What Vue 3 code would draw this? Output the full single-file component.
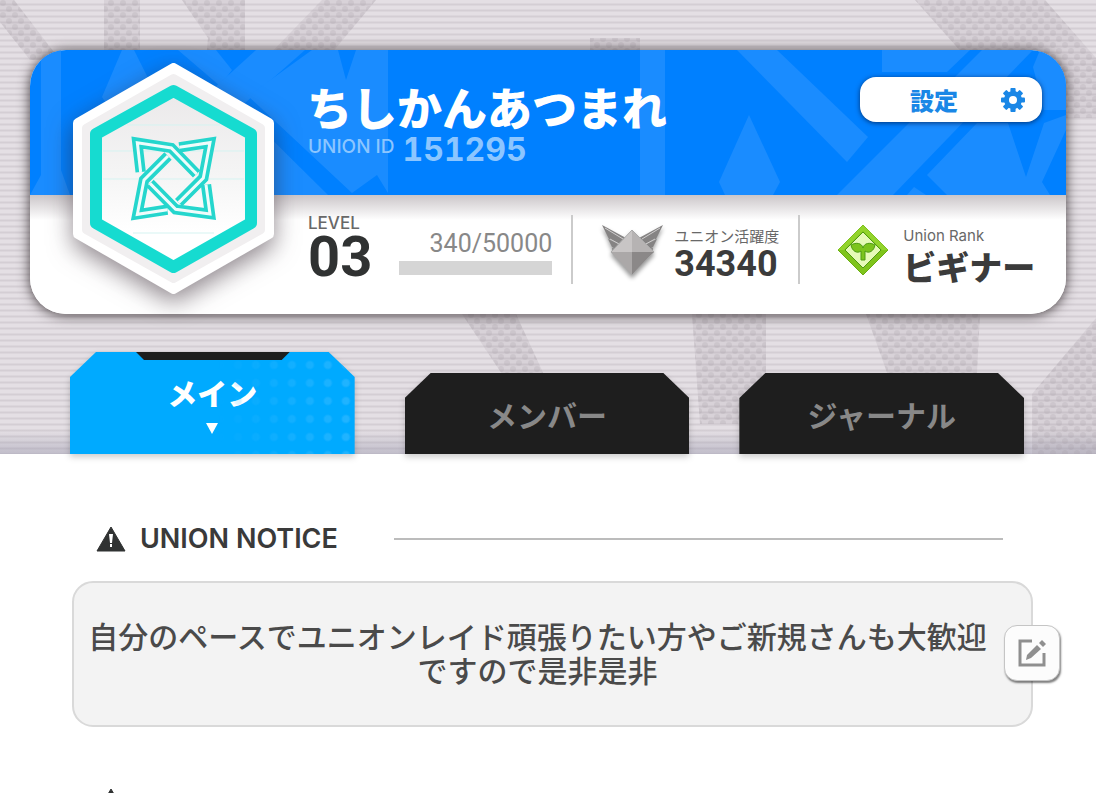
<template>
  <div class="union-page">
    <header class="hero">
      <!-- 背景のハーフトーン - Halftone backdrop -->
      <svg class="hero-pattern" viewBox="0 0 1096 454" preserveAspectRatio="none" aria-hidden="true">
        <defs>
          <pattern id="halftone" width="12" height="12" patternUnits="userSpaceOnUse">
            <circle cx="3" cy="3" r="3" />
            <circle cx="9" cy="9" r="3" />
          </pattern>
        </defs>
        <g class="halftone-base">
          <polygon v-for="shape in backdropShapes" :key="shape" :points="shape" />
        </g>
        <g class="halftone-dots" fill="url(#halftone)">
          <polygon v-for="shape in backdropShapes" :key="shape" :points="shape" />
        </g>
      </svg>

      <section class="union-card">
        <div class="banner">
          <svg class="banner-pattern" viewBox="0 0 1036 145" preserveAspectRatio="none" aria-hidden="true">
            <polygon v-for="shape in bannerShapes" :key="shape" :points="shape" />
          </svg>
          <div class="union-title">
            <h1>{{ union.name }}</h1>
            <p class="union-id">
              <span class="union-id-label">UNION ID</span>
              <span class="union-id-value">{{ union.id }}</span>
            </p>
          </div>
          <button type="button" class="settings-button">
            <span>設定</span>
            <svg viewBox="0 0 24 24" class="gear" aria-hidden="true">
              <rect
                v-for="angle in gearAngles"
                :key="angle"
                x="9.4"
                y="0"
                width="5.2"
                height="6"
                rx="1"
                :transform="`rotate(${angle} 12 12)`"
              />
              <circle cx="12" cy="12" r="6.5" class="gear-ring" />
            </svg>
          </button>
        </div>

        <!-- ユニオンエンブレム - Union emblem -->
        <svg class="emblem" viewBox="0 0 201 231" aria-hidden="true">
          <defs>
            <linearGradient id="emblem-fill" x1="0" y1="0" x2="0" y2="1">
              <stop offset="0" stop-color="#ebe9ea" />
              <stop offset="0.45" stop-color="#f4f4f4" />
              <stop offset="0.8" stop-color="#ffffff" />
            </linearGradient>
          </defs>
          <polygon class="emblem-outer" points="100.5,5 196,60 196,171 100.5,226 5,171 5,60" />
          <polygon class="emblem-rim" points="100.5,15 188,65 188,167 100.5,216 13,167 13,65" />
          <polygon class="emblem-ring" points="100.5,28 178,71 178,160 100.5,204 23,160 23,71" />
          <path class="emblem-scan" d="M54 62H147M30 88H171M30 116H171M60 170H141" />
          <g transform="translate(37 47) scale(0.3333)">
            <g v-for="strand in knotStrands" :key="strand">
              <polyline class="knot-edge" :points="strand" />
              <polyline class="knot-core" :points="strand" />
            </g>
          </g>
        </svg>

        <div class="stats">
          <div class="stat level">
            <div class="level-number">
              <span class="level-label">LEVEL</span>
              <strong>{{ union.level }}</strong>
            </div>
            <div class="exp">
              <span class="exp-value">340/50000</span>
              <div class="exp-bar" role="progressbar" aria-valuemin="0" aria-valuemax="50000" aria-valuenow="340"></div>
            </div>
          </div>

          <div class="stat activity">
            <svg class="wing-badge" viewBox="0 0 62 58" aria-hidden="true">
              <g class="wings">
                <path d="M0 3 L24 16 L18 22 L7 17 Z" />
                <path d="M6 17 L18 23 L14 27 L10 25 Z" />
                <path d="M10 26 L15 27 L11 31 Z" />
                <path d="M61 3 L37 16 L43 22 L54 17 Z" />
                <path d="M55 17 L43 23 L47 27 L51 25 Z" />
                <path d="M51 26 L46 27 L50 31 Z" />
                <path class="wing-line" d="M3 6 L21 17 M8 17 L19 23 M58 6 L40 17 M53 17 L42 23" />
              </g>
              <path d="M30 8 L9 30 H30 Z" fill="#c8c5c5" />
              <path d="M30 8 L52 30 H30 Z" fill="#b6b3b3" />
              <path d="M9 30 L30 53 V30 Z" fill="#aba8a8" />
              <path d="M52 30 L30 53 V30 Z" fill="#8b8888" />
              <path d="M30 8 L52 30 L30 53 L9 30 Z" fill="none" stroke="#aaa" />
            </svg>
            <div class="stat-text">
              <span class="activity-label">ユニオン活躍度</span>
              <strong class="activity-value">{{ union.activity }}</strong>
            </div>
          </div>

          <div class="stat rank">
            <svg class="rank-badge" viewBox="0 0 52 52" aria-hidden="true">
              <path d="M26 1 L51 26 L26 51 L1 26 Z" fill="#7fc41c" stroke="#69ad10" />
              <path d="M26 1 L51 26 L45 26 L26 7 L7 26 L1 26 Z" fill="#93d42c" />
              <path d="M26 8 L44 26 L26 44 L8 26 Z" fill="#e6fab8" stroke="#4f9a10" />
              <path
                d="M26 24 C25 19 19 18 14 21 C15 27 20 30 24 27 L24 28 V36 H28 V27 C32 30 37 27 38 21 C33 18 27 19 26 24 Z"
                fill="#7cc41e"
                stroke="#4c9b12"
              />
            </svg>
            <div class="stat-text">
              <span class="rank-label">Union Rank</span>
              <strong class="rank-value">{{ union.rank }}</strong>
            </div>
          </div>
        </div>
      </section>

      <nav class="tabs">
        <button
          v-for="tab in tabs"
          :key="tab.id"
          type="button"
          class="tab"
          :class="{ active: tab.id === activeTab }"
          @click="activeTab = tab.id"
        >
          <span>{{ tab.label }}</span>
          <svg v-if="tab.id === activeTab" class="tab-arrow" viewBox="0 0 12 11" aria-hidden="true">
            <path d="M0 0 H12 L6 11 Z" />
          </svg>
        </button>
      </nav>
    </header>

    <main class="content">
      <section class="notice">
        <h2 class="section-title">
          <svg class="warning" viewBox="0 0 30 26" aria-hidden="true">
            <path d="M15 1 L29 25 H1 Z" />
            <path class="warning-mark" d="M13 8 H17 L16 17 H14 Z M14 18 H16 V21 H14 Z" />
          </svg>
          <span>UNION NOTICE</span>
        </h2>
        <div class="notice-box">
          <p>{{ union.notice }}</p>
          <button type="button" class="edit-button" aria-label="編集">
            <svg viewBox="0 0 30 30" aria-hidden="true">
              <path class="edit-frame" d="M15 3 H3 V27 H27 V15" />
              <path d="M9 22 L10 17 L20 7 L24 11 L14 20 Z" />
              <path d="M22 5 L25 2 L29 6 L26 9 Z" />
            </svg>
          </button>
        </div>
      </section>

      <section class="next-section">
        <svg class="warning" viewBox="0 0 30 26" aria-hidden="true">
          <path d="M15 1 L29 25 H1 Z" />
          <path class="warning-mark" d="M13 8 H17 L16 17 H14 Z M14 18 H16 V21 H14 Z" />
        </svg>
      </section>
    </main>
  </div>
</template>

<script setup>
import { ref } from 'vue'

const union = {
  name: 'ちしかんあつまれ',
  id: '151295',
  level: '03',
  activity: '34340',
  rank: 'ビギナー',
  notice: '自分のペースでユニオンレイド頑張りたい方やご新規さんも大歓迎ですので是非是非'
}

const tabs = [
  { id: 'main', label: 'メイン' },
  { id: 'member', label: 'メンバー' },
  { id: 'journal', label: 'ジャーナル' }
]
const activeTab = ref('main')

const gearAngles = [0, 45, 90, 135, 180, 225, 270, 315]

// エンブレムの組み紐 - Interlaced strands of the emblem
const knotStrands = [
  '92,186 82,98 184,114 260,192',
  '172,299 82,313 102,210 174,138',
  '288,224 300,312 197,298 120,220',
  '208,112 300,98 280,204 206,278'
]

// 背景の帯 - Bands behind the card
const backdropShapes = [
  '0,0 14,0 60,60 30,60 0,22',
  '104,0 140,0 140,60 104,60',
  '182,0 245,0 245,60 206,60 208,38',
  '322,0 376,0 326,60 264,60',
  '590,38 640,38 640,60 590,60',
  '915,0 1045,0 1096,58 1096,118 1020,118',
  '462,314 516,314 552,392 514,392',
  '692,314 766,314 766,424 700,424',
  '866,314 980,314 976,392 894,392',
  '1096,318 1096,454 1032,454 1032,394'
]

const bannerShapes = [
  '11,0 31,0 31,120 40,145 0,145 11,125',
  '92,0 104,0 134,60 100,90 72,47',
  '148,0 186,0 202,20 190,36',
  '226,0 275,0 190,75 160,60',
  '282,0 308,0 316,30 326,0 358,0 358,143 347,125 322,143 218,46',
  '210,58 298,145 244,145 210,120',
  '610,0 635,0 635,145 610,145',
  '707,0 747,0 838,87 817,112',
  '719,65 750,132 743,145 695,145 689,132',
  '852,0 940,0 917,22 852,22',
  '952,0 1003,0 863,145 807,145',
  '897,125 947,73 978,73 996,127 1014,73 1036,65 1036,80 1012,132 1020,145 917,145',
  '1010,0 1003,17 1014,60 1036,60 1036,0',
  '877,145 884,137 896,145'
]
</script>

<style>
body {
  margin: 0;
  background: #fff;
}
</style>

<style scoped>
.union-page {
  height: 100vh;
  overflow: hidden;
  background: #fff;
  color: #3b3b3b;
  font-family: "Noto Sans CJK JP", sans-serif;
}

h1,
h2,
p {
  margin: 0;
}

button {
  border: 0;
  padding: 0;
  font-family: inherit;
  cursor: pointer;
}

/* ヘッダー背景 - Striped backdrop */
.hero {
  position: relative;
  padding: 50px 30px 0;
  background:
    linear-gradient(to bottom, transparent 430px, rgba(150, 148, 170, 0.45)),
    repeating-linear-gradient(to bottom, #e4dfe4 0 3px, #d4ced4 4px 5px, #e4dfe4 6px);
}

.hero-pattern {
  position: absolute;
  inset: 0;
  width: 100%;
  height: 100%;
  fill: #988f98;
  opacity: 0.4;
}

.halftone-base {
  opacity: 0.4;
}

.halftone-dots {
  opacity: 0.6;
}

/* ユニオンカード - Union card */
.union-card {
  position: relative;
  display: grid;
  grid-template-columns: 278px 1fr;
  grid-template-rows: 145px 119px;
  border-radius: 36px;
  background: #fff;
  box-shadow: 0 1px 12px 1px rgba(50, 42, 45, 0.8);
}

.banner {
  position: relative;
  grid-column: 1 / -1;
  grid-row: 1;
  display: flex;
  justify-content: space-between;
  align-items: flex-start;
  padding: 27px 24px 0 277px;
  border-radius: 36px 36px 0 0;
  overflow: hidden;
  background: #0080ff;
}

.banner-pattern {
  position: absolute;
  inset: 0;
  width: 100%;
  height: 100%;
  fill: #1a8cff;
}

.union-title {
  position: relative;
  white-space: nowrap;
}

h1 {
  font-size: 45px;
  font-weight: 900;
  line-height: 60px;
  color: #fff;
}

.union-id {
  display: flex;
  align-items: flex-start;
  gap: 8px;
  padding-left: 1px;
  font-family: Inter, sans-serif;
  color: #8cc6ff;
}

.union-id-label {
  font-size: 19px;
  font-weight: 500;
  line-height: 20px;
}

.union-id-value {
  font-size: 32px;
  font-weight: 700;
  line-height: 26px;
  font-variant-numeric: tabular-nums;
}

.settings-button {
  position: relative;
  display: flex;
  align-items: center;
  justify-content: flex-end;
  gap: 43px;
  width: 182px;
  height: 45px;
  padding-right: 17px;
  border-radius: 16px;
  background: #fff;
  box-shadow: 0 1px 5px rgba(0, 30, 80, 0.8);
  font-size: 24px;
  font-weight: 900;
  line-height: 32px;
  color: #1a87e6;
}

.gear {
  width: 24px;
  height: 24px;
  fill: #1a87e6;
}

.gear-ring {
  fill: none;
  stroke: #1a87e6;
  stroke-width: 5;
}

/* エンブレム - Emblem */
.emblem {
  position: relative;
  grid-column: 1;
  grid-row: 1 / 3;
  width: 201px;
  height: 231px;
  margin: 13px 0 0 43px;
  filter: drop-shadow(0 8px 12px rgba(50, 35, 45, 0.55));
}

.emblem-outer {
  fill: #fff;
  stroke: #fff;
  stroke-width: 10;
  stroke-linejoin: round;
}

.emblem-rim {
  fill: #f1eff0;
  stroke: #f1eff0;
  stroke-width: 8;
  stroke-linejoin: round;
}

.emblem-ring {
  fill: url(#emblem-fill);
  stroke: #16dbd0;
  stroke-width: 12;
  stroke-linejoin: round;
}

.emblem-scan {
  fill: none;
  stroke: #d5f3f1;
  stroke-width: 1;
}

.knot-edge {
  fill: none;
  stroke: #25d6cd;
  stroke-width: 31;
}

.knot-core {
  fill: none;
  stroke: #effcfb;
  stroke-width: 9;
}

/* ステータス - Stats */
.stats {
  grid-column: 1 / -1;
  grid-row: 2;
  display: flex;
  align-items: flex-start;
  padding: 20px 0 0 278px;
  border-radius: 0 0 36px 36px;
  background: linear-gradient(to bottom, #cbc6c9, #fff 25px);
  white-space: nowrap;
}

.stat {
  display: flex;
  align-items: flex-start;
  height: 69px;
}

.stat strong {
  display: block;
}

.level {
  gap: 27px;
  padding-right: 19px;
  border-right: 2px solid #cbcbcb;
}

.level-label {
  display: block;
  font-family: Inter, sans-serif;
  font-size: 17px;
  font-weight: 500;
  line-height: 16px;
  color: #686868;
}

.level-number strong {
  font-family: Roboto, sans-serif;
  font-size: 56px;
  font-weight: 700;
  line-height: 52px;
  color: #303232;
}

.exp {
  width: 153px;
  padding-top: 15px;
  text-align: right;
}

.exp-value {
  display: block;
  font-family: Roboto, sans-serif;
  font-size: 25px;
  line-height: 28px;
  color: #888;
}

.exp-bar {
  height: 14px;
  margin-top: 3px;
  background: #d5d5d5;
}

.activity {
  gap: 10px;
  padding: 0 19px 0 29px;
  border-right: 2px solid #cbcbcb;
}

.wing-badge {
  width: 62px;
  height: 58px;
  margin-top: 7px;
  filter: drop-shadow(0 3px 2px rgba(0, 0, 0, 0.4));
}

.wings {
  fill: #858383;
}

.wing-line {
  fill: none;
  stroke: #d0cece;
  stroke-width: 1;
}

.stat-text {
  padding-top: 10px;
}

.stat-text span {
  display: block;
  line-height: 22px;
  color: #686868;
}

.activity-label {
  font-size: 15px;
}

.activity-value {
  font-family: Roboto, sans-serif;
  font-size: 36px;
  font-weight: 700;
  line-height: 34px;
}

.rank {
  gap: 14px;
  padding-left: 37px;
}

.rank-badge {
  width: 52px;
  height: 52px;
  margin-top: 9px;
}

.rank-label {
  font-family: Inter, sans-serif;
  font-size: 15px;
}

.rank-value {
  font-size: 33px;
  font-weight: 900;
  line-height: 38px;
}

/* タブ - Tabs */
.tabs {
  position: relative;
  z-index: 1;
  display: flex;
  align-items: flex-end;
  gap: 50px;
  margin-top: 38px;
  padding: 0 42px 0 40px;
  filter: drop-shadow(0 3px 3px rgba(0, 0, 0, 0.2));
}

.tab {
  position: relative;
  flex: 1;
  height: 81px;
  background: #1e1e1e;
  clip-path: polygon(26px 0, calc(100% - 26px) 0, 100% 25px, 100% 100%, 0 100%, 0 25px);
  font-size: 30px;
  font-weight: 700;
  line-height: 40px;
  color: #888;
}

.tab.active {
  display: flex;
  flex-direction: column;
  align-items: center;
  height: 102px;
  padding-top: 20px;
  background: #00aaff;
  color: #fff;
  font-weight: 900;
}

.tab.active::before {
  content: "";
  position: absolute;
  top: 0;
  left: 66px;
  right: 65px;
  height: 8px;
  background: #1e1e1e;
  clip-path: polygon(0 0, 100% 0, calc(100% - 8px) 100%, 8px 100%);
}

/* 右側のドット模様 - Dots fading in on the right */
.tab.active::after {
  content: "";
  position: absolute;
  inset: 4px 0 0 40%;
  background: radial-gradient(circle, #22b4ff 3px, transparent 5px) right top / 18px 18px;
  mask-image: linear-gradient(to right, transparent 20%, #000);
}

.tab-arrow {
  width: 12px;
  height: 11px;
  margin-top: 11px;
  fill: #fff;
}

/* お知らせ - Notice */
.content {
  padding: 70px 63px 0 72px;
}

.section-title {
  display: flex;
  align-items: center;
  padding: 0 30px 0 24px;
  font-family: Inter, sans-serif;
  font-size: 27px;
  font-weight: 600;
  line-height: 30px;
  color: #3a3a3a;
}

.section-title::after {
  content: "";
  flex: 1;
  height: 2px;
  margin-left: 56px;
  background: #bcbcbc;
}

.warning {
  width: 30px;
  height: 26px;
  margin-right: 14px;
  fill: #303232;
  stroke: #303232;
  stroke-linejoin: round;
}

.warning-mark {
  fill: #fff;
  stroke: none;
}

.notice-box {
  position: relative;
  display: flex;
  align-items: center;
  box-sizing: border-box;
  min-height: 146px;
  margin-top: 27px;
  padding: 0 42px 4px 12px;
  border: 2px solid #d9d9d9;
  border-radius: 21px;
  background: #f3f3f3;
}

.notice-box p {
  flex: 1;
  font-size: 30px;
  font-weight: 500;
  line-height: 34px;
  text-align: center;
  color: #4a4a4a;
}

.edit-button {
  position: absolute;
  top: 42px;
  right: -29px;
  display: flex;
  align-items: center;
  justify-content: center;
  width: 56px;
  height: 56px;
  border: 1px solid #c5c5c5;
  border-radius: 13px;
  background: #fcfcfc;
  box-shadow: 1px 2px 2px rgba(0, 0, 0, 0.5);
}

.edit-button svg {
  width: 30px;
  height: 30px;
  fill: #8f8f8f;
}

.edit-button .edit-frame {
  fill: none;
  stroke: #8f8f8f;
  stroke-width: 3;
}

.next-section {
  margin-top: 61px;
  padding-left: 24px;
}
</style>
